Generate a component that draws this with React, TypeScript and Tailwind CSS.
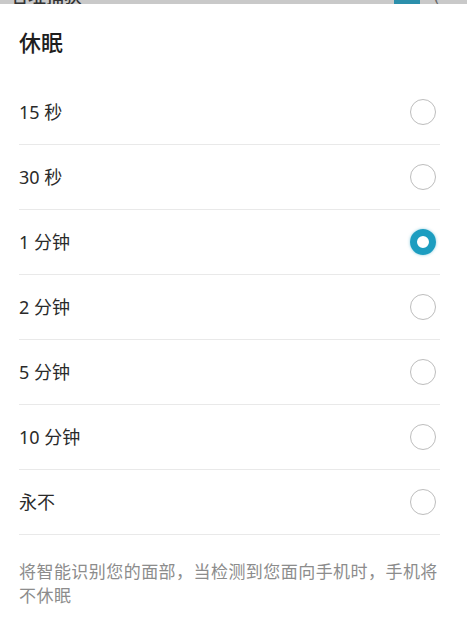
import React from "react";

const items = ["15 秒", "30 秒", "1 分钟", "2 分钟", "5 分钟", "10 分钟", "永不"];
const selected = 2;

export default function App() {
  return (
    <div
      className="w-[467px] h-[621px] bg-white overflow-hidden flex flex-col"
      style={{ fontFamily: '"Noto Sans", "Noto Sans CJK SC", sans-serif' }}
    >
      <div className="h-[4px] bg-[#c9c9c9] overflow-hidden flex items-end justify-between px-[10px]">
        <span className="text-[18px] leading-[18px] text-[#333] mb-[-1px] font-medium">名址捕获</span>
        <div className="flex items-end gap-[14px] mr-[18px]">
          <div className="w-[26px] h-[4px] bg-[#2b8fab]" />
          <span className="text-[16px] leading-[16px] text-[#666]">(</span>
        </div>
      </div>
      <div className="h-[76px] flex items-center px-[19px]">
        <span className="text-[22px] font-medium text-[#1e1e1e]">休眠</span>
      </div>
      <div className="flex flex-col px-[19px] mr-[8px]">
        {items.map((t, i) => (
          <div
            key={t}
            className="h-[65px] flex items-center justify-between border-b border-[#e9e9e9]"
          >
            <span className="text-[18px] text-[#2a2a2a]">{t}</span>
            {i === selected ? (
              <div className="w-[26px] h-[26px] rounded-full border-[7px] border-[#1c9dc0] mr-[4px] shadow-[0_0_3px_rgba(28,157,192,0.5)]" />
            ) : (
              <div className="w-[26px] h-[26px] rounded-full border-[1.5px] border-[#bdbdbd] mr-[4px]" />
            )}
          </div>
        ))}
      </div>
      <div className="px-[19px] pt-[25px] mr-[8px]">
        <p className="text-[17px] leading-[24px] tracking-[0.45px] text-[#8c8c8c]">
          将智能识别您的面部，当检测到您面向手机时，手机将不休眠
        </p>
      </div>
    </div>
  );
}
